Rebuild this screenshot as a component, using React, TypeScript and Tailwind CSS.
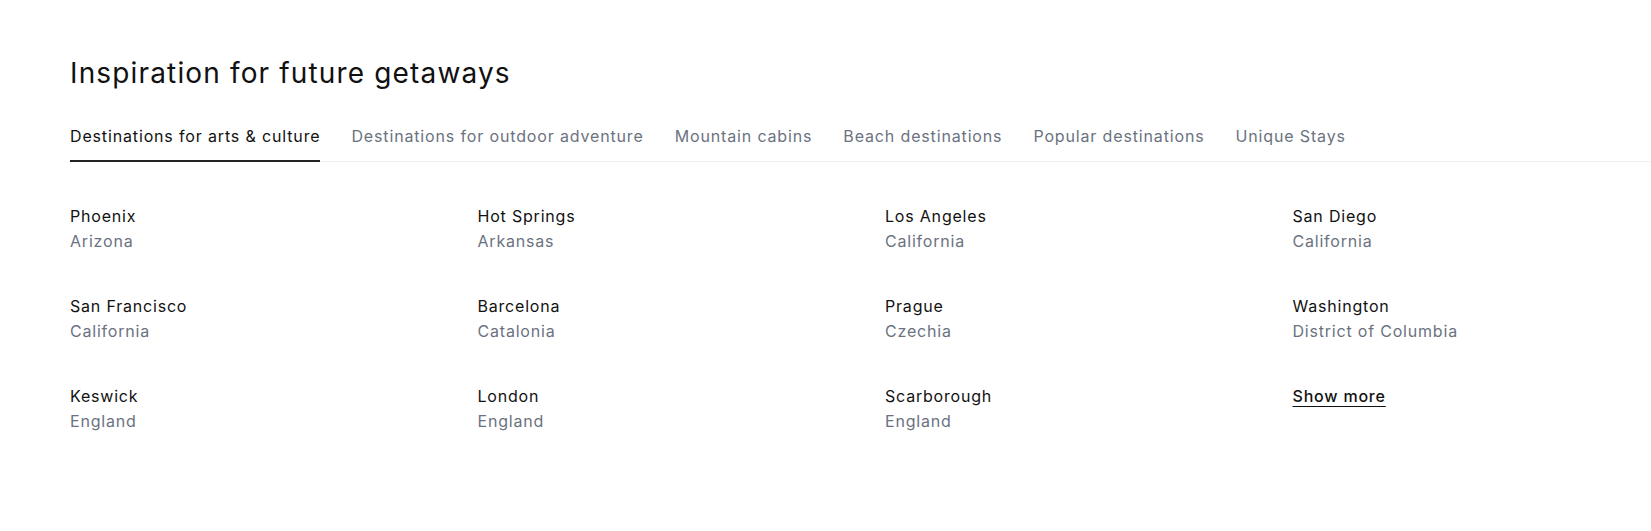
const tabs = [
  "Destinations for arts & culture",
  "Destinations for outdoor adventure",
  "Mountain cabins",
  "Beach destinations",
  "Popular destinations",
  "Unique Stays",
];

const places = [
  { city: "Phoenix", region: "Arizona" },
  { city: "Hot Springs", region: "Arkansas" },
  { city: "Los Angeles", region: "California" },
  { city: "San Diego", region: "California" },
  { city: "San Francisco", region: "California" },
  { city: "Barcelona", region: "Catalonia" },
  { city: "Prague", region: "Czechia" },
  { city: "Washington", region: "District of Columbia" },
  { city: "Keswick", region: "England" },
  { city: "London", region: "England" },
  { city: "Scarborough", region: "England" },
];

export default function App() {
  return (
    <div className="min-h-[531px] bg-white pl-[70px] pt-[55px] font-['Inter',sans-serif] text-[#111]">
      <h2 className="text-[28px] leading-9 font-normal tracking-[1.15px]">Inspiration for future getaways</h2>

      <div className="mt-[33px] flex gap-[31px] border-b border-[#f0f0f0]">
        {tabs.map((t, i) => (
          <button
            key={t}
            className={
              i === 0
                ? "-mb-px border-b-2 border-[#222] pb-3 text-base leading-6 tracking-[0.85px] text-[#111]"
                : "-mb-px border-b-2 border-transparent pb-3 text-base leading-6 tracking-[0.85px] text-[#6b7280]"
            }
          >
            {t}
          </button>
        ))}
      </div>

      <div className="mt-[42px] grid grid-cols-[repeat(4,407.5px)] gap-y-[40px] tracking-[0.8px]">
        {places.map((p) => (
          <div key={p.city} className="text-base leading-[25px]">
            <p className="text-[#111]">{p.city}</p>
            <p className="text-[#6b7280]">{p.region}</p>
          </div>
        ))}
        <div className="text-base leading-[25px]">
          <a href="#" className="text-[#111] font-medium underline underline-offset-4">
            Show more
          </a>
        </div>
      </div>
    </div>
  );
}
